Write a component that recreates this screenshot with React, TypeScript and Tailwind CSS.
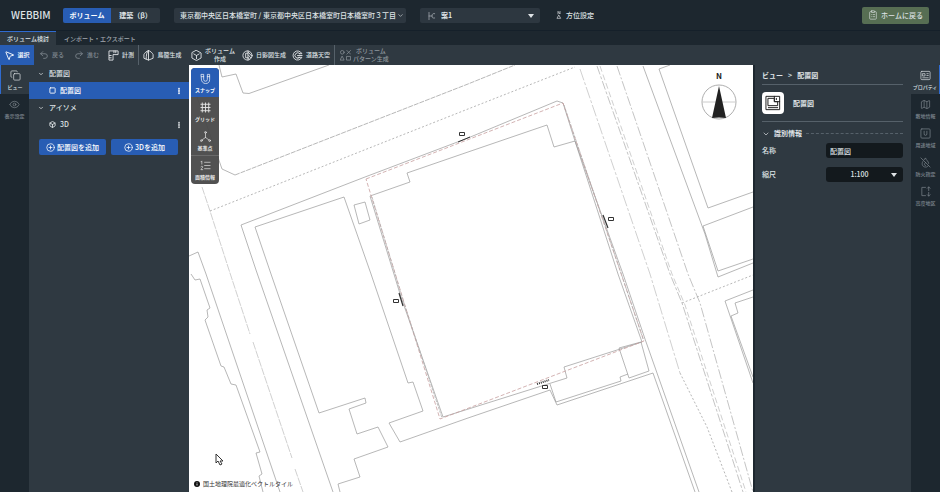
import React from 'react';
import {
  Undo2,
  Redo2,
  Box,
  ChevronDown,
  CirclePlus,
  ClipboardList,
  Copy,
  Ellipsis,
  Eye,
  Map,
  MousePointer2,
  Square,
} from 'lucide-react';

type IconProps = { children: React.ReactNode; size?: number; stroke?: number; className?: string };

// Shared wrapper for the outline icons that lucide does not have
function Glyph({ children, size = 11, stroke = 2, className = '' }: IconProps) {
  return (
    <svg
      width={size}
      height={size}
      viewBox="0 0 24 24"
      fill="none"
      stroke="currentColor"
      strokeWidth={stroke}
      strokeLinecap="round"
      strokeLinejoin="round"
      className={`shrink-0 ${className}`}
      aria-hidden="true"
    >
      {children}
    </svg>
  );
}

const Caret = ({ className = '' }: { className?: string }) => (
  <svg width="6" height="4" viewBox="0 0 6 4" className={`pointer-events-none ${className}`} aria-hidden="true">
    <path d="M0 0h6L3 4z" fill="currentColor" />
  </svg>
);

const RulerIcon = () => (
  <Glyph>
    <path d="M3 2h19v8H11v12H3z M13 2v4 M17 2v4 M3 12h4 M3 17h4" />
  </Glyph>
);

const CageIcon = () => (
  <Glyph>
    <path d="M12 1c5 2 8 5 10 9v8l-10 4-10-4v-8c2-4 5-7 10-9z M12 1v21 M12 1c-4 4-5 9-5 19" />
  </Glyph>
);

const CubeIcon = () => (
  <Glyph>
    <path d="M12 1l10 5.500v11L12 23 2 17.500v-11z M6 8.500l6 3.500 6-3.500 M12 12v7" />
  </Glyph>
);

const ShadowIcon = () => (
  <Glyph>
    <circle cx="12" cy="12" r="10" />
    <path d="M13 2v20 M14 5l7 8 M14 11l5 6 M14 17l2 3" />
    <path d="M13 7H8v10h5" />
  </Glyph>
);

const SkyIcon = () => (
  <Glyph>
    <path d="M21 7a10 10 0 1 0 0 10" />
    <path d="M17 8a6 6 0 1 0 0 8 M12 12h10 M13 16h8 M16 8h5" />
  </Glyph>
);

const PatternIcon = () => (
  <Glyph stroke={1.5}>
    <circle cx="5" cy="5" r="4" />
    <path d="M15 1l8 8 M23 1l-8 8 M5 14l4 8H1z M15 14h8v8h-8z" />
  </Glyph>
);

const tools = [
  { label: ['計測'], icon: <RulerIcon />, width: 'w-[34px]' },
  { label: ['鳥籠生成'], icon: <CageIcon />, width: 'w-[48px] border-l border-[#56616a]' },
  { label: ['ボリューム', '作成'], icon: <CubeIcon />, width: 'w-[54px]' },
  { label: ['日影図生成'], icon: <ShadowIcon />, width: 'w-[48px]' },
  { label: ['道路天空'], icon: <SkyIcon />, width: 'w-[46px]' },
];

const mapTools = [
  {
    label: 'スナップ',
    style: 'bg-[#285db4] text-white',
    icon: (
      <Glyph size={11} stroke={1.5}>
        <path d="M3 3h5v11a4 4 0 0 0 8 0V3h5v11a9 9 0 0 1-18 0z M3 8h5 M16 8h5" />
      </Glyph>
    ),
  },
  {
    label: 'グリッド',
    style: '',
    icon: (
      <Glyph size={11}>
        <path d="M5 2v20 M12 2v20 M19 2v20 M2 5h20 M2 12h20 M2 19h20" />
      </Glyph>
    ),
  },
  {
    label: '基準点',
    style: '',
    icon: (
      <Glyph size={11} stroke={1.5}>
        <path d="M12 4v10 M12 14l-8 6 M12 14l8 6" />
        <circle cx="12" cy="3" r="2" />
        <circle cx="3" cy="21" r="2" />
        <circle cx="21" cy="21" r="2" />
      </Glyph>
    ),
  },
  {
    label: '面積情報',
    style: 'border-t border-[#6a6a6a]',
    icon: (
      <Glyph size={11} stroke={1.5}>
        <path d="M10 5h12 M10 12h12 M10 19h12 M2 4l2-2v7 M2 15c0-2 4-2 4 0 0 3-4 3-4 6h4" />
      </Glyph>
    ),
  },
];

const rightRail = [
  {
    label: 'プロパティ',
    active: true,
    icon: (
      <Glyph stroke={1.5}>
        <rect x="2" y="3" width="20" height="18" rx="2" />
        <path d="M6 8h5v5H6z M15 8h3 M15 12h3 M6 17h12" />
      </Glyph>
    ),
  },
  { label: '敷地情報', active: false, icon: <Map size={11} strokeWidth={1.5} /> },
  {
    label: '用途地域',
    active: false,
    icon: (
      <Glyph stroke={1.5}>
        <rect x="2" y="2" width="20" height="20" rx="2" />
        <path d="M9 7v6a3 3 0 0 0 6 0V7" />
      </Glyph>
    ),
  },
  {
    label: '防火指定',
    active: false,
    icon: (
      <Glyph stroke={1.5}>
        <path d="M2 2l20 20 M9 6l3-4c1 5 7 7 7 12 M6 10c-4 7 1 12 6 12 3 0 5-1 6-3 M12 12c-3 3-3 6 0 7" />
      </Glyph>
    ),
  },
  {
    label: '高度地区',
    active: false,
    icon: (
      <Glyph stroke={1.5}>
        <path d="M12 3H4v18h8 M19 2v8 M16 5l3-3 3 3 M19 14v8 M16 19l3 3 3-3" />
      </Glyph>
    ),
  },
];

function Header() {
  return (
    <header className="flex h-[31px] shrink-0 items-center border-b border-[#15202a] bg-[#1d272f] px-[11px] text-[7px] font-medium">
      <h1 className="w-[52px] text-[10px] font-medium leading-4">WEBBIM</h1>
      <div className="flex h-[15px] overflow-hidden rounded-[2px] bg-[#2d3740]">
        <button className="w-[48px] bg-[#285db4] font-bold text-white">ボリューム</button>
        <button className="w-[49px] font-bold">建築（β）</button>
      </div>
      <button className="ml-[14px] flex h-[15px] w-[232px] items-center justify-between whitespace-nowrap rounded-[2px] bg-[#2d3740] pl-[6px] pr-[2px]">
        <span>東京都中央区日本橋室町 / 東京都中央区日本橋室町日本橋室町３丁目</span>
        <ChevronDown size={7} className="shrink-0" />
      </button>
      <div className="relative ml-[14px] h-[15px] w-[120px]">
        <select aria-label="案" className="h-full w-full appearance-none rounded-[2px] bg-[#2d3740] pl-[21px] pr-3 font-bold">
          <option>案1</option>
        </select>
        <Glyph size={8} className="pointer-events-none absolute left-[8px] top-[4px] text-[#b5bcc1]">
          <path d="M3 1v22 M3 12h9 M20 5h-4c-2 0-4 3-4 7s2 6 4 6h4" />
        </Glyph>
        <Caret className="absolute right-[6px] top-[6px]" />
      </div>
      <button className="ml-[15px] flex items-center gap-[3px]">
        <Glyph size={8}>
          <path d="M9 9V1l6 8V1 M12 13l5 9H7z" />
        </Glyph>
        方位設定
      </button>
      <button className="ml-auto flex h-[17px] w-[67px] items-center justify-center gap-[3px] rounded-[2px] bg-[#576e53]">
        <ClipboardList size={10} strokeWidth={1.5} />
        ホームに戻る
      </button>
    </header>
  );
}

function Toolbar() {
  return (
    <div className="flex h-5 shrink-0 items-stretch bg-[#2f3941] text-[6px] font-medium leading-[8px]">
      <button className="flex w-[34px] items-center justify-center gap-[2px] bg-[#285db4] text-white">
        <MousePointer2 size={11} />
        選択
      </button>
      <button className="flex w-[35px] items-center justify-center gap-[3px] text-[#7f888f]">
        <Undo2 size={10} />
        戻る
      </button>
      <button className="flex w-[35px] items-center justify-center gap-[3px] text-[#7f888f]">
        <Redo2 size={10} />
        進む
      </button>
      {tools.map((tool) => (
        <button key={tool.label[0]} className={`flex items-center justify-center gap-[3px] ${tool.width}`}>
          {tool.icon}
          <span className="whitespace-nowrap">
            {tool.label.map((line) => (
              <span key={line} className="block">{line}</span>
            ))}
          </span>
        </button>
      ))}
      <button className="flex items-center gap-[2px] border-l border-[#56616a] pl-[5px] text-[#90989e]">
        <PatternIcon />
        <span>
          <span className="block">ボリューム</span>
          <span className="block">パターン生成</span>
        </span>
      </button>
    </div>
  );
}

function ViewPanel() {
  return (
    <aside className="w-40 shrink-0 bg-[#2f3941] text-[7px] font-medium">
      <button className="flex h-[17px] w-full items-center gap-[5px] pl-[9px]">
        <ChevronDown size={6} strokeWidth={3} />
        配置図
      </button>
      <div className="flex h-[17px] items-center bg-[#285db4] pl-5 pr-[6px] text-white">
        <Square size={7} strokeWidth={3} />
        <button className="ml-1 flex-1 text-left">配置図</button>
        <button aria-label="配置図のメニュー"><Ellipsis size={8} strokeWidth={4} className="rotate-90" /></button>
      </div>
      <button className="flex h-[17px] w-full items-center gap-[5px] pl-[9px]">
        <ChevronDown size={6} strokeWidth={3} />
        アイソメ
      </button>
      <div className="flex h-[17px] items-center pl-5 pr-[6px]">
        <Box size={7} strokeWidth={3} />
        <button className="ml-1 flex-1 text-left">3D</button>
        <button aria-label="3Dのメニュー"><Ellipsis size={8} strokeWidth={4} className="rotate-90" /></button>
      </div>
      <div className="mt-[6px] grid grid-cols-2 gap-[5px] pl-[10px] pr-[11px] text-white">
        <button className="flex h-4 items-center justify-center gap-[2px] rounded-[2px] bg-[#285db4]">
          <CirclePlus size={9} />
          配置図を追加
        </button>
        <button className="flex h-4 items-center justify-center gap-[2px] rounded-[2px] bg-[#285db4]">
          <CirclePlus size={9} />
          3Dを追加
        </button>
      </div>
    </aside>
  );
}

function SiteMap() {
  return (
    <svg
      className="absolute inset-0 h-full w-full"
      viewBox="189 65 564 427"
      preserveAspectRatio="xMinYMin slice"
      fill="none"
      stroke="#989898"
      strokeWidth="0.7"
      role="img"
      aria-label="配置図"
    >
      {/* buildings and kerbs on the west side */}
      <path d="M219 65l3 12 14-3 7 19 6 .5L329 65" />
      <path d="M197 97l25 72 13 6" />
      <path d="M235 175L468 84l47-19" strokeDasharray="5 1" />
      <path d="M189 256l9-4 8 22 74 218" />
      <path d="M191 274l4 6 5-1 10 29-3 2 1 7-3 3 16 46 3 1 7 17 5 1 24 67-4 1 6 21-3 2 4 16" />
      <path d="M202 187l8 24 19 59 21 64M253 342l39 116M295 469l8 23" stroke="#bbb" strokeDasharray="8 1" />
      <path d="M210 211l258-102 107-42" strokeDasharray="2 2" />

      {/* block outline */}
      <path d="M333 492L256 270l-15-45 124-48" />
      <path d="M365 177l103-39 89-37 6 2 12 38 48 133 22 65 54 153" />
      <path d="M340 492l-2-8 22-7-6-18 34-12-10-20-21 7-8-25 17-6-1-5-46 15-48-139-16-47 89-30 27 77 37 109 5-1 10 29-34 12 11 19 68-24 82-28 7 15 96-32 42 119" />
      <path d="M354 205l11-3 5 18-11 4z" />
      <path d="M370 196l40-14-3-9 61-21 79-27 7 22 21-6 43 133 24 68-78 25 3 11-124 39-42-120z" />
      <path d="M550 384l6 18 65-21-1-4 8-3M619 348l22-6 8 29-20 7z" />

      {/* site boundary */}
      <path d="M366 179l197-76 81 238-204 78z" stroke="#c8a0a0" strokeWidth="0.8" strokeDasharray="4 2" />
      <path d="M372 197l30 100 40 121M564 105l57 168 22 66" stroke="#aaa" strokeDasharray="3 1" />

      {/* east road */}
      <path d="M580 69l70 205 30 99" stroke="#bbb" strokeDasharray="12 2 3 2" />
      <path d="M680 373l27 54 25 65" strokeDasharray="2 2" />
      <path d="M597 66l73 208 12 29 61 189" stroke="#aaa" strokeDasharray="9 2 3 2" />
      <path d="M600 66l72 208 13 31 61 187" stroke="#bbb" strokeDasharray="6 3" />
      <path d="M617 66l71 208 12 29 53 189" stroke="#aaa" strokeDasharray="10 2 2 2" />
      <path d="M643 66l62 168 13 43 35-14" />
      <path d="M670 65l-11 4 49 139 45-16M753 207l-50 19 15 45 35-12" />
      <path d="M682 303l71-28" strokeDasharray="2 2" />
      <path d="M753 290l-28 11 28 82M753 297l-18 6 3 10-7 3 22 61" />

      {/* boundary markers */}
      <g stroke="#333">
        <path d="M458 142l12-5" strokeWidth="1" />
        <path d="M603 215l5 13M399 293l4 13" strokeWidth="1.2" />
        <path d="M537 384l12-4" strokeWidth="2" strokeDasharray="1 1" />
        <path d="M459.500 132.500h5v3h-5zM608.500 217.500h5v3h-5zM393.500 299.500h5v3h-5zM542.500 385.500h5v3h-5z" strokeWidth="1" />
      </g>
    </svg>
  );
}

function Canvas() {
  return (
    <main className="relative min-w-0 flex-1 overflow-hidden bg-white">
      <SiteMap />
      <div className="absolute left-[2px] top-[3px] flex w-7 flex-col overflow-hidden rounded-[4px] bg-[#484848]/95 text-[5px] font-bold leading-[7px] text-[#e5e5e5]">
        {mapTools.map((tool) => (
          <button key={tool.label} className={`flex h-[29px] flex-col items-center justify-center gap-[2px] ${tool.style}`}>
            {tool.icon}
            {tool.label}
          </button>
        ))}
      </div>
      <div className="absolute right-4 top-[6px] flex w-9 flex-col items-center gap-[3px] text-[8px] font-bold leading-[10px] text-[#222]">
        N
        <svg width="36" height="36" viewBox="0 0 36 36" fill="none" stroke="#999" aria-hidden="true">
          <circle cx="18" cy="18" r="17" strokeWidth="0.8" />
          <path d="M1 18h34" stroke="#ccc" />
          <path d="M18 2l7 32q-7-1-14 0z" fill="#222" stroke="none" />
        </svg>
      </div>
      <svg className="absolute bottom-[26px] left-[26px]" width="9" height="13" viewBox="0 0 9 13" aria-hidden="true">
        <path d="M1 1v9l2-2 2 4 2-1-2-3h3z" fill="#fff" stroke="#333" />
      </svg>
      <p className="absolute bottom-[3px] left-[5px] flex items-center gap-[3px] text-[6px] leading-[10px] text-[#333]">
        <svg width="6" height="6" viewBox="0 0 6 6" aria-hidden="true">
          <circle cx="3" cy="3" r="3" fill="#111" />
          <path d="M3 2.500v2M3 1.200v.6" stroke="#fff" strokeWidth="0.8" />
        </svg>
        国土地理院最適化ベクトルタイル
      </p>
    </main>
  );
}

function PropertyPanel() {
  return (
    <aside className="w-[158px] shrink-0 border-l-2 border-[#1d272f] bg-[#2f3941] pl-[7px] pr-2 text-[7px] font-medium">
      <nav className="flex h-5 items-center gap-[5px] border-b border-[#56616a] pt-[2px] font-bold">
        <a href="#view">ビュー</a>
        <span>&gt;</span>
        <span>配置図</span>
      </nav>
      <div className="flex h-[37px] items-center gap-[9px] border-b border-[#56616a]">
        <span className="flex size-[22px] items-center justify-center rounded-[4px] bg-white text-[#222]">
          <Glyph size={16} stroke={1.5}>
            <path d="M2 2h20v20H2z M5 5h9v5h5v6H5z M14 2v8h8 M17 5v2 M5 19h14" />
          </Glyph>
        </span>
        <span className="font-bold">配置図</span>
      </div>
      <button className="mt-[5px] flex h-[13px] w-full items-center gap-[4px] font-bold">
        <ChevronDown size={8} />
        識別情報
        <span className="flex-1 border-t border-dashed border-[#56616a]" />
      </button>
      <div className="mt-[3px] flex h-[15px] items-center">
        <label htmlFor="name" className="w-16">名称</label>
        <input id="name" defaultValue="配置図" className="h-full min-w-0 flex-1 rounded-[3px] bg-[#13191d] px-1" />
      </div>
      <div className="mt-[9px] flex h-[15px] items-center">
        <label htmlFor="scale" className="w-16">縮尺</label>
        <div className="relative h-full flex-1">
          <select id="scale" className="h-full w-full appearance-none rounded-[3px] bg-[#13191d] pr-[10px] text-center">
            <option>1:100</option>
          </select>
          <Caret className="absolute right-[6px] top-[6px]" />
        </div>
      </div>
    </aside>
  );
}

export default function App() {
  return (
    <div className="flex h-screen flex-col overflow-hidden bg-[#1d272f] font-['Noto_Sans_CJK_JP',sans-serif] text-[#dfe3e6]">
      <Header />
      <nav className="flex h-[14px] shrink-0 text-[6px] font-medium">
        <button className="w-14 border-t border-[#2f6bd0] bg-[#2f3941]">ボリューム検討</button>
        <button className="px-2 text-[#a3aab0]">インポート・エクスポート</button>
      </nav>
      <Toolbar />
      <div className="flex min-h-0 flex-1">
        <nav className="flex w-[29px] shrink-0 flex-col text-[5px] font-medium leading-[7px]">
          <button className="flex h-[29px] flex-col items-center justify-center gap-[2px] border-l border-[#2f6bd0] bg-[#2f3941]">
            <Copy size={11} strokeWidth={1.5} />
            ビュー
          </button>
          <button className="flex h-[29px] flex-col items-center justify-center gap-[2px] text-[#7f888f]">
            <Eye size={11} strokeWidth={1.5} />
            表示設定
          </button>
        </nav>
        <ViewPanel />
        <Canvas />
        <PropertyPanel />
        <nav className="flex w-[29px] shrink-0 flex-col text-[5px] font-medium leading-[7px]">
          {rightRail.map((item) => (
            <button
              key={item.label}
              className={`flex h-[29px] flex-col items-center justify-center gap-[2px] whitespace-nowrap ${
                item.active ? 'border-r border-[#2f6bd0] bg-[#2f3941]' : 'text-[#7f888f]'
              }`}
            >
              {item.icon}
              {item.label}
            </button>
          ))}
        </nav>
      </div>
    </div>
  );
}
